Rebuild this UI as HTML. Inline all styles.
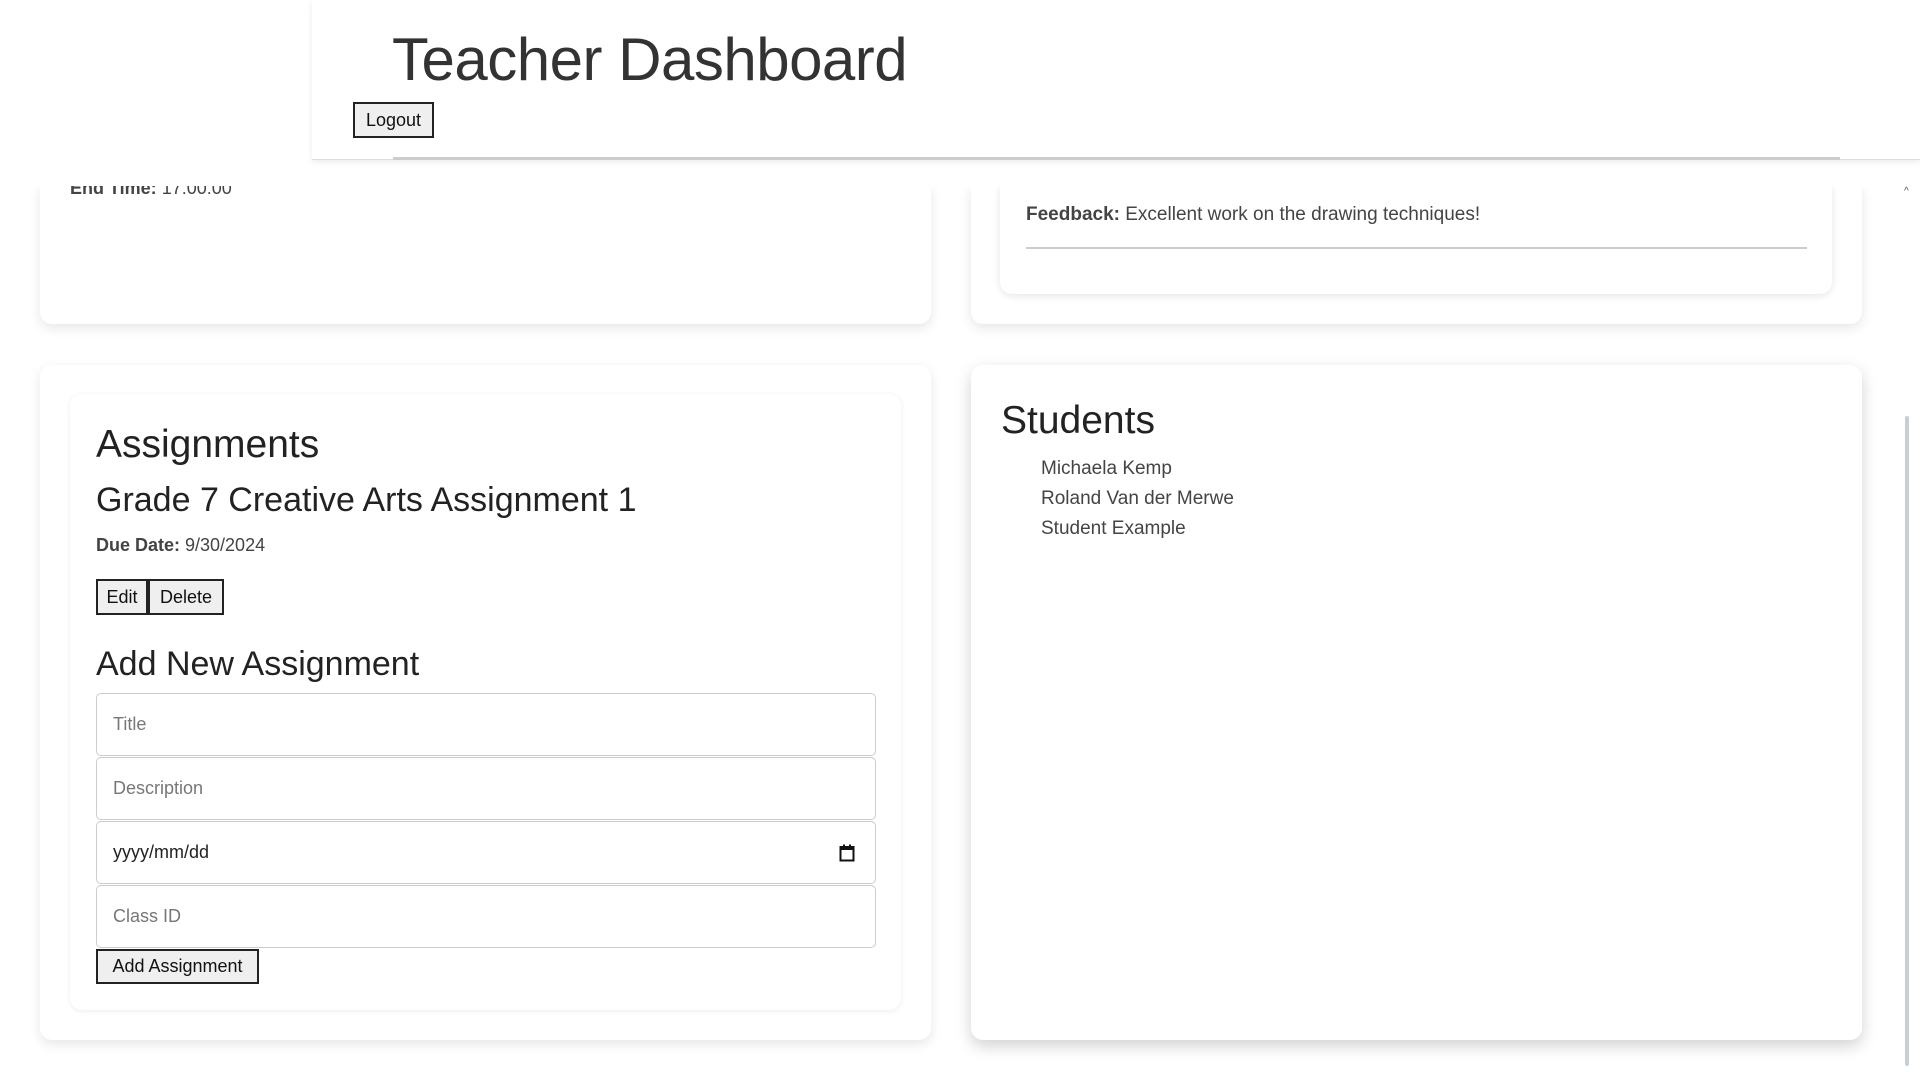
<!DOCTYPE html>
<html><head><meta charset="utf-8"><style>
*{box-sizing:border-box;margin:0;padding:0}
body{width:1920px;height:1080px;overflow:hidden;background:#fff;font-family:"Liberation Sans",sans-serif;color:#333;position:relative}
.abs{position:absolute}
.card{position:absolute;background:#fff;border-radius:12px;box-shadow:0 4px 12px rgba(0,0,0,.1)}
.btn{position:absolute;background:#efefef;border:2px solid #222;font-size:18px;color:#111;display:flex;align-items:center;justify-content:center}
.inp{position:absolute;left:96px;width:780px;height:63px;border:1px solid #ccc;border-radius:5px;font-size:18px;color:#777;padding-left:16px;display:flex;align-items:center;background:#fff}
</style></head><body>
<div class="card" style="left:40px;top:186px;width:891px;height:138px;border-radius:0 0 12px 12px"></div>
<div class="abs" style="left:70px;top:178px;font-size:18px;color:#444"><b>End Time:</b> 17:00:00</div>
<div class="card" style="left:971px;top:186px;width:891px;height:138px;border-radius:0 0 12px 12px"></div>
<div class="card" style="left:1000px;top:186px;width:832px;height:108px;border-radius:0 0 12px 12px;box-shadow:0 2px 8px rgba(0,0,0,.1)"></div>
<div class="abs" style="left:1026px;top:204px;font-size:19px;color:#444"><b>Feedback:</b> Excellent work on the drawing techniques!</div>
<div class="abs" style="left:1026px;top:247px;width:781px;height:2px;background:#ccc"></div>

<div class="abs" style="left:0;top:0;width:1900px;height:186px;background:#fff"></div>
<div class="abs" style="left:312px;top:0;width:1608px;height:160px;background:#fff;border-bottom:1px solid #ddd;box-shadow:0 2px 6px rgba(0,0,0,.08)"></div>
<div class="abs" style="left:393px;top:157px;width:1447px;height:3px;background:#ccc"></div>
<div class="abs" style="left:392px;top:25px;font-size:60px;color:#333;letter-spacing:-0.5px">Teacher Dashboard</div>
<div class="btn" style="left:353px;top:102px;width:81px;height:36px">Logout</div>

<div class="card" style="left:40px;top:365px;width:891px;height:675px"></div>
<div class="card" style="left:70px;top:394px;width:831px;height:616px;box-shadow:0 1px 6px rgba(0,0,0,.08)"></div>
<div class="abs" style="left:96px;top:423px;font-size:39px;color:#222">Assignments</div>
<div class="abs" style="left:96px;top:481px;font-size:34px;color:#222">Grade 7 Creative Arts Assignment 1</div>
<div class="abs" style="left:96px;top:535px;font-size:18px;color:#444"><b>Due Date:</b> 9/30/2024</div>
<div class="btn" style="left:96px;top:579px;width:52px;height:36px">Edit</div>
<div class="btn" style="left:148px;top:579px;width:76px;height:36px">Delete</div>
<div class="abs" style="left:96px;top:645px;font-size:34px;color:#222">Add New Assignment</div>
<div class="inp" style="top:693px">Title</div>
<div class="inp" style="top:757px">Description</div>
<div class="inp" style="top:821px;color:#222">yyyy/mm/dd
<svg class="abs" style="right:20px;top:22px" width="16" height="18" viewBox="0 0 16 18"><rect x="1.5" y="3" width="13" height="13.5" fill="none" stroke="#111" stroke-width="2"/><rect x="1" y="3" width="14" height="3" fill="#111"/><rect x="4" y="0.5" width="2" height="3" fill="#111"/><rect x="10" y="0.5" width="2" height="3" fill="#111"/></svg></div>
<div class="inp" style="top:885px">Class ID</div>
<div class="btn" style="left:96px;top:949px;width:163px;height:35px">Add Assignment</div>

<div class="card" style="left:971px;top:365px;width:891px;height:675px;box-shadow:0 6px 16px rgba(0,0,0,.18)"></div>
<div class="abs" style="left:1001px;top:399px;font-size:39px;color:#222">Students</div>
<div class="abs" style="left:1041px;top:454px;font-size:19px;color:#444;line-height:30px">Michaela Kemp<br>Roland Van der Merwe<br>Student Example</div>

<div class="abs" style="left:1905px;top:416px;width:4px;height:650px;background:#c8ced6;border-radius:2px"></div>
<div class="abs" style="left:1904px;top:186px;font-size:10px;color:#555">^</div>
</body></html>
